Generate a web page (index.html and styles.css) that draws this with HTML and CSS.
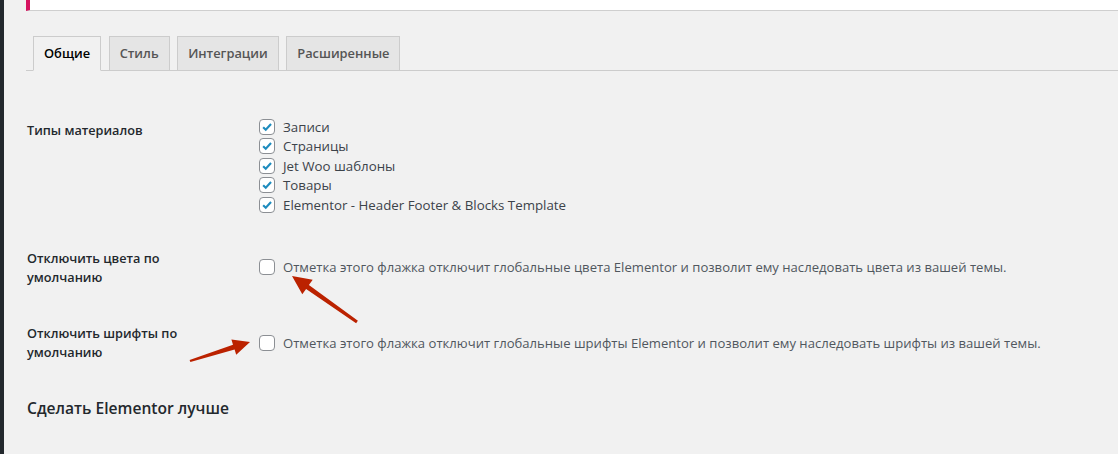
FILE: index.html
```html
<!DOCTYPE html>
<html lang="ru">
<head>
<meta charset="utf-8">
<title>Elementor — Настройки</title>
<link rel="stylesheet" href="styles.css">
</head>
<body>
<div class="page">
  <div class="menu-edge"></div>
  <div class="wrap">
    <div class="notice"></div>
    <nav class="tabs">
      <span class="tab active">Общие</span>
      <span class="tab">Стиль</span>
      <span class="tab">Интеграции</span>
      <span class="tab">Расширенные</span>
    </nav>
    <div class="form">
      <div class="row row-types">
        <div class="th">Типы материалов</div>
        <div class="td list">
          <label class="opt"><span class="cb checked"><svg viewBox="0 0 16 16"><path d="M3.6 8.2 L6.6 11.2 L12.6 4.6" /></svg></span>Записи</label>
          <label class="opt"><span class="cb checked"><svg viewBox="0 0 16 16"><path d="M3.6 8.2 L6.6 11.2 L12.6 4.6" /></svg></span>Страницы</label>
          <label class="opt"><span class="cb checked"><svg viewBox="0 0 16 16"><path d="M3.6 8.2 L6.6 11.2 L12.6 4.6" /></svg></span>Jet Woo шаблоны</label>
          <label class="opt"><span class="cb checked"><svg viewBox="0 0 16 16"><path d="M3.6 8.2 L6.6 11.2 L12.6 4.6" /></svg></span>Товары</label>
          <label class="opt"><span class="cb checked"><svg viewBox="0 0 16 16"><path d="M3.6 8.2 L6.6 11.2 L12.6 4.6" /></svg></span>Elementor - Header Footer &amp; Blocks Template</label>
        </div>
      </div>
      <div class="row row-flag">
        <div class="th">Отключить цвета по<br>умолчанию</div>
        <div class="td">
          <label class="opt desc"><span class="cb"></span>Отметка этого флажка отключит глобальные цвета Elementor и позволит ему наследовать цвета из вашей темы.</label>
        </div>
      </div>
      <div class="row row-flag row-last">
        <div class="th">Отключить шрифты по<br>умолчанию</div>
        <div class="td">
          <label class="opt desc"><span class="cb"></span>Отметка этого флажка отключит глобальные шрифты Elementor и позволит ему наследовать шрифты из вашей темы.</label>
        </div>
      </div>
    </div>
    <h2 class="section-title">Сделать Elementor лучше</h2>
  </div>
  <svg class="arrows" viewBox="0 0 1118 454" width="1118" height="454">
    <polygon points="292,276 312.7,279.7 308.9,285 357.9,320.8 356.1,323.2 306.1,289 302.3,294.3" />
    <polygon points="250,342 231.4,339.5 233,344.7 189.6,359.9 190.4,362.1 234.6,349.5 236.2,354.7" />
  </svg>
</div>
</body>
</html>
```

FILE: styles.css
```css
html, body {
  margin: 0;
  padding: 0;
  height: 100%;
  background: #f1f1f1;
}

.page {
  position: relative;
  display: flex;
  width: 1118px;
  height: 454px;
  overflow: hidden;
  font-family: "Open Sans", "Noto Sans", sans-serif;
  font-size: 13px;
  color: #23282d;
}

.menu-edge {
  width: 4px;
  flex: none;
  background: #23282d;
}

.wrap {
  flex: 1;
  padding-left: 22px;
}

.notice {
  height: 10px;
  background: #fff;
  border-left: 4px solid #d5135f;
  border-bottom: 1px solid #cfcfcf;
}

.tabs {
  display: flex;
  margin-top: 24px;
  border-bottom: 1px solid #ccc;
  padding-left: 7px;
  gap: 7.5px;
  height: 35px;
  align-items: flex-end;
}

.tab {
  box-sizing: border-box;
  height: 35px;
  margin-bottom: -1px;
  padding: 0 10px;
  border: 1px solid #ccc;
  background: #e5e5e5;
  color: #555;
  font-weight: 600;
  font-size: 12.85px;
  line-height: 33px;
}

.tab.active {
  background: #f1f1f1;
  border-bottom-color: #f1f1f1;
  color: #000;
}

.form {
  display: flex;
  flex-direction: column;
  padding-top: 30px;
}

.row {
  display: grid;
  grid-template-columns: 232px 1fr;
  align-items: start;
  padding-left: 1px;
}

.th {
  font-weight: 600;
  font-size: 12.7px;
  color: #23282d;
  line-height: 19px;
  padding-top: 19px;
  padding-bottom: 18px;
}

.row-types .th {
  padding-top: 20px;
  padding-bottom: 19px;
}

.td {
  padding-top: 16px;
  padding-bottom: 15px;
}

.list {
  display: flex;
  flex-direction: column;
}

.opt {
  display: flex;
  align-items: center;
  gap: 8px;
  height: 19.5px;
  font-size: 13.3px;
  color: #3c434a;
  white-space: nowrap;
}

.row-flag .td {
  padding-top: 27px;
}

.row-last .td {
  padding-top: 28px;
}

.desc {
  height: 20px;
  font-size: 13.1px;
  color: #50575e;
}

.cb {
  box-sizing: border-box;
  width: 16px;
  height: 16px;
  flex: none;
  border: 1px solid #8c8f94;
  border-radius: 4px;
  background: #fff;
  display: flex;
  align-items: center;
  justify-content: center;
}

.cb svg {
  width: 14px;
  height: 14px;
  fill: none;
  stroke: #1e8cbe;
  stroke-width: 2.4;
}

.section-title {
  margin: 17px 0 0 1px;
  font-size: 15.6px;
  font-weight: 600;
  line-height: 22px;
  color: #23282d;
}

.arrows {
  position: absolute;
  left: 0;
  top: 0;
  pointer-events: none;
}

.arrows polygon {
  fill: #bb2200;
}
```
